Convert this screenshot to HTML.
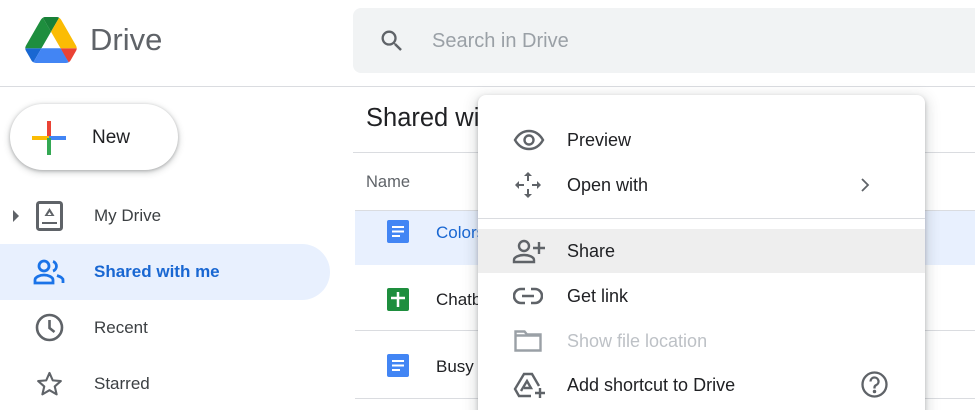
<!DOCTYPE html>
<html><head><meta charset="utf-8"><style>
*{margin:0;padding:0;box-sizing:border-box}
html,body{width:975px;height:410px;overflow:hidden}
body{background:#fff;font-family:"Liberation Sans",Arial,sans-serif;position:relative;color:#202124}
.abs{position:absolute}
.t{position:absolute;white-space:nowrap}
</style></head><body>
<svg class="abs" style="left:25px;top:17px" width="52" height="46" viewBox="0 0 87.3 78">
<path d="M6.6 66.85l3.85 6.65c.8 1.4 1.95 2.5 3.3 3.3L27.5 53H0c0 1.55.4 3.1 1.2 4.5z" fill="#1967d2"/>
<path d="M43.65 25L29.9 1.2c-1.35.8-2.5 1.9-3.3 3.3l-25.4 44A9.06 9.06 0 0 0 0 53h27.5z" fill="#1e8e3e"/>
<path d="M73.55 76.8c1.35-.8 2.5-1.9 3.3-3.3l1.6-2.75 7.65-13.25c.8-1.4 1.2-2.95 1.2-4.5H59.8l5.85 11.5z" fill="#ea4335"/>
<path d="M43.65 25L57.4 1.2C56.05.4 54.5 0 52.9 0H34.4c-1.6 0-3.15.45-4.5 1.2z" fill="#188038"/>
<path d="M59.8 53H27.5L13.75 76.8c1.35.8 2.9 1.2 4.5 1.2h50.8c1.6 0 3.15-.45 4.5-1.2z" fill="#4285f4"/>
<path d="M73.4 26.5L60.7 4.5c-.8-1.4-1.95-2.5-3.3-3.3L43.65 25 59.8 53h27.45c0-1.55-.4-3.1-1.2-4.5z" fill="#fbbc04"/>
</svg>
<div class="t" style="left:90px;top:22px;font-size:31px;color:#5f6368">Drive</div>
<div class="abs" style="left:353px;top:8px;width:640px;height:65px;background:#f1f3f4;border-radius:8px"></div>
<svg class="abs" style="left:378px;top:27px" width="28" height="28" viewBox="0 0 24 24"><path d="M15.5 14h-.79l-.28-.27A6.47 6.47 0 0 0 16 9.5 6.5 6.5 0 1 0 9.5 16c1.61 0 3.09-.59 4.23-1.57l.27.28v.79l5 4.99L20.49 19l-4.99-5zm-6 0C7.01 14 5 11.99 5 9.5S7.01 5 9.5 5 14 7.01 14 9.5 11.99 14 9.5 14z" fill="#5f6368"/></svg>
<div class="t" style="left:432px;top:30px;font-size:20px;color:#9aa0a6">Search in Drive</div>
<div class="abs" style="left:0;top:86px;width:975px;height:1px;background:#dadce0"></div>
<div class="abs" style="left:10px;top:104px;width:168px;height:66px;border-radius:33px;background:#fff;box-shadow:0 1px 3px rgba(60,64,67,.35),0 2px 6px 2px rgba(60,64,67,.15)"></div>
<svg class="abs" style="left:31px;top:120px" width="36" height="36" viewBox="0 0 36 36">
<rect x="16" y="1" width="4" height="17" fill="#ea4335"/><rect x="1" y="16" width="17" height="4" fill="#fbbc04"/><rect x="18" y="16" width="17" height="4" fill="#4285f4"/><rect x="16" y="18" width="4" height="17" fill="#34a853"/></svg>
<div class="t" style="left:92px;top:127px;font-size:19px;color:#202124">New</div>
<svg class="abs" style="left:12px;top:209px" width="8" height="14"><path d="M1 1l6 6-6 6z" fill="#5f6368"/></svg>
<svg class="abs" style="left:36px;top:201px" width="27" height="30" viewBox="0 0 27 30"><rect x="1.5" y="1.5" width="24" height="27" rx="2" fill="none" stroke="#5f6368" stroke-width="3"/><path d="M6 22h15" stroke="#5f6368" stroke-width="2"/><path d="M13.5 7l5 8h-10z" fill="#5f6368"/><path d="M13.5 11l2 3h-4z" fill="#fff"/></svg>
<div class="t" style="left:94px;top:206px;font-size:17px;color:#3c4043">My Drive</div>
<div class="abs" style="left:0;top:244px;width:330px;height:56px;background:#e8f0fe;border-radius:0 28px 28px 0"></div>
<svg class="abs" style="left:33px;top:259px" width="33" height="26" viewBox="0 0 33 26" fill="none" stroke="#1a73e8" stroke-width="2.8"><circle cx="11" cy="7" r="5"/><path d="M2 24v-3c0-3 5-5 9-5s9 2 9 5v3z"/><path d="M20 2.5a5 5 0 0 1 0 9.5M24 16.5c3 1 6 2.5 6 4.5v3"/></svg>
<div class="t" style="left:94px;top:262px;font-size:17px;color:#1967d2;font-weight:bold">Shared with me</div>
<svg class="abs" style="left:35px;top:313px" width="29" height="29" viewBox="0 0 29 29" fill="none" stroke="#5f6368" stroke-width="2.6"><circle cx="14.5" cy="14.5" r="12.5"/><path d="M14.5 7v8l5 4"/></svg>
<div class="t" style="left:94px;top:318px;font-size:17px;color:#3c4043">Recent</div>
<svg class="abs" style="left:35px;top:370px" width="29" height="28" viewBox="0 0 24 24"><path d="M12 2.5l2.8 6.4 6.9.6-5.2 4.6 1.6 6.8L12 17.3l-6.1 3.6 1.6-6.8-5.2-4.6 6.9-.6z" fill="none" stroke="#5f6368" stroke-width="1.8" stroke-linejoin="round"/></svg>
<div class="t" style="left:94px;top:374px;font-size:17px;color:#3c4043">Starred</div>
<div class="t" style="left:366px;top:104px;font-size:25.5px;color:#202124">Shared with me</div>
<div class="abs" style="left:353px;top:152px;width:622px;height:1px;background:#dadce0"></div>
<div class="t" style="left:366px;top:173px;font-size:16.5px;color:#5f6368">Name</div>
<div class="abs" style="left:355px;top:210px;width:620px;height:1px;background:#dadce0"></div>
<div class="abs" style="left:355px;top:211px;width:620px;height:54px;background:#e8f0fe"></div>
<div class="abs" style="left:355px;top:330px;width:620px;height:1px;background:#dadce0"></div>
<div class="abs" style="left:355px;top:398px;width:620px;height:1px;background:#dadce0"></div>
<svg class="abs" style="left:387px;top:220px" width="22" height="23" viewBox="0 0 22 23"><rect width="22" height="23" rx="2" fill="#4285f4"/><path d="M5 7h12M5 11.5h12M5 16h8" stroke="#fff" stroke-width="2"/></svg>
<div class="t" style="left:436px;top:223px;font-size:17px;color:#1967d2">Colors</div>
<svg class="abs" style="left:387px;top:288px" width="22" height="23" viewBox="0 0 22 23"><rect width="22" height="23" rx="2" fill="#1e8e3e"/><path d="M4 10h14M11 4v15" stroke="#fff" stroke-width="2.5"/></svg>
<div class="t" style="left:436px;top:290px;font-size:17px;color:#202124">Chatbot</div>
<svg class="abs" style="left:387px;top:354px" width="22" height="23" viewBox="0 0 22 23"><rect width="22" height="23" rx="2" fill="#4285f4"/><path d="M5 7h12M5 11.5h12M5 16h8" stroke="#fff" stroke-width="2"/></svg>
<div class="t" style="left:436px;top:357px;font-size:17px;color:#202124">Busy</div>
<div class="abs" style="left:478px;top:95px;width:447px;height:330px;background:#fff;border-radius:8px;box-shadow:0 2px 4px rgba(60,64,67,.3),0 4px 12px 4px rgba(60,64,67,.15)">
<div class="abs" style="left:0;top:123px;width:447px;height:1px;background:#dadce0"></div>
<div class="abs" style="left:0;top:134px;width:447px;height:44px;background:#eeeeee"></div>
</div>
<svg class="abs" style="left:513px;top:129px" width="32" height="22" viewBox="0 0 32 22" fill="none" stroke="#5f6368" stroke-width="2.4"><path d="M2 11C6 4 11 2 16 2s10 2 14 9c-4 7-9 9-14 9S6 18 2 11z"/><circle cx="16" cy="11" r="4.5"/></svg>
<div class="t" style="left:567px;top:130px;font-size:18px">Preview</div>
<svg class="abs" style="left:514px;top:171px" width="28" height="28" viewBox="0 0 28 28" fill="#5f6368"><path d="M14 1l4 4h-3v5h-2V5h-3zM14 27l-4-4h3v-5h2v5h3zM1 14l4-4v3h5v2H5v3zM27 14l-4 4v-3h-5v-2h5v-3z"/></svg>
<div class="t" style="left:567px;top:175px;font-size:18px">Open with</div>
<svg class="abs" style="left:860px;top:177px" width="10" height="16"><path d="M2 2l6 6-6 6" fill="none" stroke="#5f6368" stroke-width="1.8"/></svg>
<svg class="abs" style="left:512px;top:239px" width="34" height="25" viewBox="0 0 34 25" fill="none" stroke="#5f6368" stroke-width="2.4"><circle cx="12" cy="7" r="5"/><path d="M2 23v-2c0-3 5-5 10-5s10 2 10 5v2z"/><path d="M27 3v12M21 9h12"/></svg>
<div class="t" style="left:567px;top:241px;font-size:18px">Share</div>
<svg class="abs" style="left:513px;top:287px" width="30" height="18" viewBox="0 0 30 18" fill="none" stroke="#5f6368" stroke-width="2.6"><path d="M12 2H8a7 7 0 0 0 0 14h4M18 2h4a7 7 0 0 1 0 14h-4M9 9h12"/></svg>
<div class="t" style="left:567px;top:286px;font-size:18px">Get link</div>
<svg class="abs" style="left:514px;top:330px" width="28" height="23" viewBox="0 0 28 23" fill="none" stroke="#9aa0a6" stroke-width="2.4"><path d="M1.5 1.5h9l2.5 3h13.5v16h-25z"/><path d="M1.5 5.5h25"/></svg>
<div class="t" style="left:567px;top:331px;font-size:18px;color:#bdc1c6">Show file location</div>
<svg class="abs" style="left:513px;top:371px" width="33" height="28" viewBox="0 0 33 28" fill="none" stroke="#5f6368" stroke-width="2.4"><path d="M18 25H6l-4-7L11 3h8l7 12"/><path d="M8 20l6-10 4 7h-7"/><path d="M27 17v10M22 22h10"/></svg>
<div class="t" style="left:567px;top:375px;font-size:18px">Add shortcut to Drive</div>
<svg class="abs" style="left:861px;top:371px" width="27" height="27" viewBox="0 0 27 27" fill="none" stroke="#5f6368" stroke-width="2.3"><circle cx="13.5" cy="13.5" r="12"/><path d="M9.5 10.5a4 4 0 1 1 5.5 3.7c-1 .5-1.5 1.3-1.5 2.3v1"/><circle cx="13.5" cy="20.5" r=".6" fill="#5f6368"/></svg>
</body></html>
